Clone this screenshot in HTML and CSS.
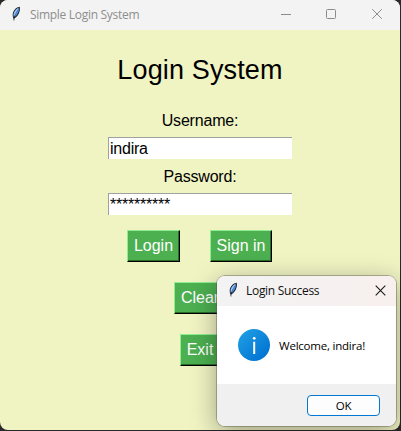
FILE: index.html
```html
<!DOCTYPE html>
<html lang="en">
<head>
<meta charset="utf-8">
<title>Simple Login System</title>
<link rel="stylesheet" href="styles.css">
</head>
<body>
<svg class="defs" width="0" height="0">
  <symbol id="feather" viewBox="0 0 10 16">
    <path d="M8.6.8C6.2.9 3.4 3.2 2.2 6 1.5 7.8 1.6 10 2.1 11.4L2.4 12.4 3 15.6 3.5 12.2C5.6 11.4 7.6 8.7 8.4 6 9 4 9.2 2 8.6.8Z" fill="#171a24"/>
    <path d="M8 1.5C5.9 2.3 3.8 4.4 2.9 6.8 2.4 8.3 2.4 9.7 2.8 10.9L6.6 4.2Z" fill="#93c4f4"/>
    <path d="M8.2 1.8C8.4 5 6.9 9 3.5 11.2L5 6.6Z" fill="#4a8ad8"/>
  </symbol>
</svg>
<div class="window">
  <header class="titlebar">
    <svg class="feather" width="10" height="16"><use href="#feather"/></svg>
    <span class="title">Simple Login System</span>
    <svg class="controls" width="104" height="12" viewBox="0 0 104 12" fill="none" stroke="#8c8c8c">
      <path d="M0 6.5H10"/>
      <rect x="45.5" y="1.5" width="9" height="9" rx="1"/>
      <path d="M91.2 1.2 100.8 10.8M100.8 1.2 91.2 10.8"/>
    </svg>
  </header>
  <main class="content">
    <h1>Login System</h1>
    <div class="label">Username:</div>
    <div class="entry">indira</div>
    <div class="label">Password:</div>
    <div class="entry">**********</div>
    <div class="row">
      <button class="btn login">Login</button>
      <button class="btn signin">Sign in</button>
    </div>
    <button class="btn clear">Clear</button>
    <button class="btn exit">Exit</button>
  </main>
</div>
<section class="dialog">
  <header class="dialog-head">
    <svg class="feather" width="10" height="16"><use href="#feather"/></svg>
    <span class="title">Login Success</span>
    <svg class="close" width="11" height="11" viewBox="0 0 11 11" stroke="#1a1a1a" stroke-width="1.1"><path d="M.7.7 10.3 10.3M10.3.7.7 10.3"/></svg>
  </header>
  <div class="dialog-body">
    <svg width="32" height="32" viewBox="0 0 32 32">
      <defs><linearGradient id="info" x1="0" y1="0" x2="1" y2="1"><stop offset=".1" stop-color="#1e9de4"/><stop offset=".9" stop-color="#0071d1"/></linearGradient></defs>
      <circle cx="16" cy="16" r="16" fill="url(#info)"/>
      <circle cx="16.2" cy="9.3" r="1.4" fill="#fff"/>
      <path d="M16.2 12.8V25" stroke="#fff" stroke-width="2"/>
    </svg>
    <span class="message">Welcome, indira!</span>
  </div>
  <footer class="dialog-foot"><button class="ok">OK</button></footer>
</section>
</body>
</html>
```
FILE: styles.css
```css
* { box-sizing: border-box; }
body {
  margin: 0;
  width: 401px;
  height: 431px;
  overflow: hidden;
  position: relative;
  background: #29292b;
  font-family: "Liberation Sans", Arial, sans-serif;
}
.defs { position: absolute; }
.window {
  width: 400px;
  height: 430px;
  border-radius: 8px;
  overflow: hidden;
  background: #f0f4c3;
}
.titlebar {
  height: 30px;
  display: flex;
  align-items: center;
  padding: 0 18px 2px 11px;
  background: #f3f3f3;
  color: #8e8e8e;
}
.title {
  font: 12px/16px "Open Sans", "Noto Sans", sans-serif;
  margin-left: 9px;
  padding-top: 1px;
  letter-spacing: -0.3px;
  white-space: nowrap;
}
.titlebar .feather { margin-top: -1px; }
.controls { margin-left: auto; margin-right: -3px; }
.content {
  display: flex;
  flex-direction: column;
  align-items: center;
}
h1 {
  margin: 25px 0 0;
  font-size: 27px;
  line-height: 31px;
  font-weight: 400;
  letter-spacing: 0.15px;
  color: #000;
}
.label {
  height: 18px;
  margin: 26px 0 7px;
  font-size: 16px;
  line-height: 18px;
  letter-spacing: -0.2px;
}
.entry {
  width: 184px;
  height: 22px;
  padding-left: 1px;
  background: #fff;
  border-top: 1px solid #a0a0a0;
  border-left: 1px solid #a0a0a0;
  font-size: 16px;
  line-height: 21px;
  letter-spacing: -0.23px;
}
.entry + .label { margin: 9px 0 7px; }
.row {
  display: flex;
  gap: 30px;
  margin: 15px 0 20px;
  padding-right: 1px;
}
.btn {
  height: 32px;
  padding: 0;
  border: 1px solid #000;
  border-top-color: #90ee90;
  border-left-color: #90ee90;
  box-shadow: inset -1px -1px #286b2b;
  background: #4caf50;
  color: #fff;
  font: 16px/30px "Liberation Sans", Arial, sans-serif;
}
.login { width: 53px; }
.signin { width: 62px; }
.clear { width: 52px; margin-bottom: 20px; }
.exit { width: 40px; }
.dialog {
  position: absolute;
  left: 217px;
  top: 276px;
  width: 179px;
  height: 150px;
  border-radius: 8px;
  overflow: hidden;
  background: #fff;
  box-shadow: 0 0 0 1px rgba(80, 80, 70, .4), 0 6px 26px rgba(0, 0, 0, .36);
}
.dialog-head {
  height: 30px;
  display: flex;
  align-items: center;
  padding: 0 10px 2px 11px;
  background: linear-gradient(90deg, #f3f3f3, #f8f0ef);
  color: #111;
}
.dialog-head .title { margin-left: 8px; }
.close { margin-left: auto; }
.dialog-body {
  height: 78px;
  display: flex;
  align-items: center;
  padding-left: 21px;
}
.message {
  margin-left: 9px;
  padding-top: 2px;
  font: 11.5px/16px "Open Sans", "Noto Sans", sans-serif;
  letter-spacing: -0.22px;
  color: #000;
  white-space: nowrap;
}
.dialog-foot {
  height: 42px;
  padding: 11px 16px 0 0;
  display: flex;
  justify-content: flex-end;
  background: #f0f0f0;
}
.ok {
  width: 73px;
  height: 21px;
  padding: 0;
  border: 1px solid #0078d4;
  border-radius: 4px;
  background: #fdfdfd;
  color: #000;
  font: 11.5px/19px "Open Sans", "Noto Sans", sans-serif;
  letter-spacing: -0.3px;
}
```
